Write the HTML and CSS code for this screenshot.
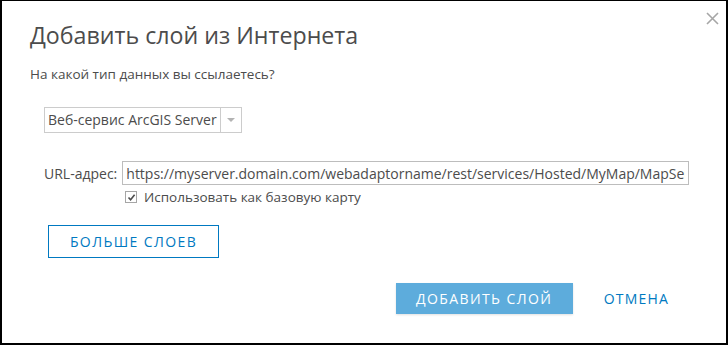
FILE: index.html
```html
<!DOCTYPE html>
<html lang="ru">
<head>
    <meta charset="UTF-8">
    <title>Добавить слой из Интернета</title>
    <link rel="stylesheet" href="styles.css">
</head>
<body>
    <div class="dialog">
        <!-- Close icon -->
        <button class="dialog-close" aria-label="Закрыть">
            <svg width="13" height="13" viewBox="0 0 13 13">
                <path d="M1 1 L12 12 M12 1 L1 12" stroke="#a6a6a6" stroke-width="1.6" fill="none"/>
            </svg>
        </button>

        <h1 class="dialog-title">Добавить слой из Интернета</h1>
        <p class="dialog-question">На какой тип данных вы ссылаетесь?</p>

        <div class="dialog-body">
            <!-- Data type selector -->
            <div class="select-box">
                <span class="select-value">Веб-сервис ArcGIS Server</span>
                <span class="select-arrow">
                    <svg width="8" height="4" viewBox="0 0 8 4"><path d="M0 0 H8 L4 4 Z" fill="#b3b3b3"/></svg>
                </span>
            </div>

            <!-- URL row -->
            <div class="url-row">
                <label class="url-label" for="url">URL-адрес:</label>
                <input class="url-input" id="url" type="text" value="https://myserver.domain.com/webadaptorname/rest/services/Hosted/MyMap/MapServer">
            </div>

            <label class="basemap-row">
                <span class="checkbox">
                    <svg width="9" height="9" viewBox="0 0 9 9"><path d="M1.5 4.5 L3.6 6.8 L7.6 1.8" stroke="#4c4c4c" stroke-width="1.6" fill="none"/></svg>
                </span>
                Использовать как базовую карту
            </label>

            <button class="more-button">Больше слоев</button>
        </div>

        <div class="dialog-footer">
            <button class="add-button">Добавить слой</button>
            <button class="cancel-button">Отмена</button>
        </div>
    </div>
</body>
</html>
```

FILE: styles.css
```css
/* Basic reset */
* {
    margin: 0;
    padding: 0;
    box-sizing: border-box;
}

body {
    font-family: "Open Sans", "Noto Sans", sans-serif;
    background-color: #fff;
    color: #595959;
}

/* Dialog */
.dialog {
    position: relative;
    width: 728px;
    height: 345px;
    border-style: solid;
    border-color: #000;
    border-width: 1px 2px 2px 2px;
    padding: 0 0 0 28px;
}

.dialog-close {
    position: absolute;
    top: 11px;
    right: 7px;
    width: 13px;
    height: 13px;
    border: none;
    background: none;
    display: flex;
}

.dialog-title {
    font-size: 23.2px;
    font-weight: normal;
    color: #4c4c4c;
    line-height: 30px;
    margin-top: 19px;
}

.dialog-question {
    font-size: 13.5px;
    line-height: 18px;
    margin-top: 15px;
    color: #4c4c4c;
}

/* Form */
.dialog-body {
    padding-left: 14px;
    display: flex;
    flex-direction: column;
    align-items: flex-start;
}

.select-box {
    display: flex;
    margin-top: 24px;
    width: 198px;
    height: 26px;
    border: 1px solid #ccc;
}

.select-value {
    flex: 1;
    font-size: 14px;
    line-height: 24px;
    padding-left: 3px;
    color: #4c4c4c;
    border-right: 1px solid #ccc;
    white-space: nowrap;
}

.select-arrow {
    width: 20px;
    display: flex;
    align-items: center;
    justify-content: center;
}

.url-row {
    display: flex;
    align-items: center;
    gap: 5px;
    margin-top: 28px;
}

.url-label {
    font-size: 14px;
    color: #4c4c4c;
}

.url-input {
    width: 567px;
    height: 24px;
    border: 1px solid #bdbdbd;
    font-family: inherit;
    font-size: 14px;
    color: #4c4c4c;
    padding: 0 3px;
    outline: none;
}

.basemap-row {
    display: flex;
    align-items: center;
    gap: 7px;
    margin: 3px 0 0 81px;
    font-size: 13.5px;
    color: #4c4c4c;
}

.checkbox {
    width: 12px;
    height: 12px;
    border: 1px solid #a6a6a6;
    display: flex;
    align-items: center;
    justify-content: center;
}

.more-button {
    margin: 19px 0 0 4px;
    width: 171px;
    height: 33px;
    border: 1px solid #0079c1;
    background: #fff;
    color: #0079c1;
    font-family: inherit;
    font-size: 14px;
    letter-spacing: 1.4px;
    text-transform: uppercase;
}

/* Footer */
.dialog-footer {
    display: flex;
    justify-content: flex-end;
    align-items: center;
    margin-top: 25px;
    padding-right: 57px;
}

.add-button {
    width: 177px;
    height: 31px;
    border: none;
    background-color: #5dacdc;
    color: #fff;
    font-family: inherit;
    font-size: 14px;
    letter-spacing: 1.4px;
    text-transform: uppercase;
    box-shadow: 0 1px 2px rgba(0, 0, 0, 0.12);
}

.cancel-button {
    margin-left: 31px;
    border: none;
    background: none;
    color: #0079c1;
    font-family: inherit;
    font-size: 14px;
    letter-spacing: 1.2px;
    text-transform: uppercase;
}
```
